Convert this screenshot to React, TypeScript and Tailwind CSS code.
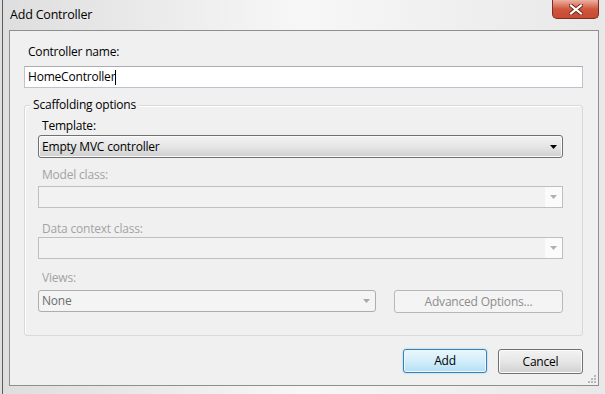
import { ReactNode } from 'react'

function Arrow({ color }: { color: string }) {
  return (
    <svg width="7" height="4" viewBox="0 0 7 4">
      <path d="M0 0h7L3.5 4z" fill={color} />
    </svg>
  )
}

function Label({ children, disabled }: { children: ReactNode; disabled?: boolean }) {
  return (
    <div className={`h-[15px] leading-[15px] pl-[4px] ${disabled ? 'text-[#a3a3a3]' : 'text-black'}`}>{children}</div>
  )
}

function DisabledCombo() {
  return (
    <div className="h-[22px] border border-[#bcc0c3] bg-[#f2f2f2] flex justify-end">
      <div className="w-[17px] h-full bg-[#fbfbfb] flex items-center justify-center">
        <Arrow color="#b0b0b0" />
      </div>
    </div>
  )
}

export default function App() {
  return (
    <div className="w-[605px] h-[394px] overflow-hidden pl-[2px] bg-gradient-to-r from-[#dedede] via-[#f7f7f7] to-[#e8e8e8] font-['Segoe_UI','Open_Sans',sans-serif] text-[12px] tracking-[-0.2px] text-black">
      <div className="h-full border-l border-[#5c5c5c] flex flex-col">
        {/* Title bar */}
        <div className="h-[30px] flex justify-between">
          <div className="pl-[7px] pt-[7px] leading-[16px] text-[12.5px]">Add Controller</div>
          <div className="mr-[6px] w-[47px] h-[19px] rounded-b-[5px] border border-t-0 border-[#7a2f22] bg-gradient-to-b from-[#eab0a2] via-[#d0573d] to-[#c84a31] flex items-center justify-center">
            <svg width="14" height="11" viewBox="0 0 14 11">
              <path d="M2 1.5l10 8M12 1.5l-10 8" stroke="#6b2419" strokeWidth="4" strokeLinecap="square" />
              <path d="M2 1.5l10 8M12 1.5l-10 8" stroke="#ffffff" strokeWidth="2.2" strokeLinecap="square" />
            </svg>
          </div>
        </div>

        {/* Client area */}
        <div className="relative ml-[6px] w-[590px] h-[356px] border border-[#8e8f8f] bg-[#f0f0f0] pt-[13px] pl-[14px] pr-[15px]">
          <Label>Controller name:</Label>
          <div className="mt-[7px] h-[22px] border border-[#bcc3cc] border-t-[#a9adb3] bg-white flex items-center pl-[3px]">
            <span>HomeController</span>
            <span className="w-px h-[15px] bg-black" />
          </div>

          {/* Scaffolding options group */}
          <div className="relative mt-[17px] h-[231px] border border-[#d3dbe0] rounded-[3px] shadow-[inset_1px_1px_0_#ffffff] pt-[12px] pl-[13px] pr-[19px]">
            <div className="absolute -top-[9px] left-[5px] px-[3px] bg-[#f0f0f0] leading-[15px]">Scaffolding options</div>

            <Label>Template:</Label>
            <div className="mt-[2px] h-[23px] border border-[#707070] rounded-[3px] bg-gradient-to-b from-[#f3f3f3] via-[#e6e6e6] to-[#cfcfcf] flex items-center justify-between pl-[3px] pr-[5px] shadow-[inset_0_0_0_1px_#fbfbfb]">
              <span>Empty MVC controller</span>
              <Arrow color="#000000" />
            </div>

            <div className="mt-[9px]">
              <Label disabled>Model class:</Label>
            </div>
            <div className="mt-[4px]">
              <DisabledCombo />
            </div>

            <div className="mt-[13px]">
              <Label disabled>Data context class:</Label>
            </div>
            <div className="mt-[1px]">
              <DisabledCombo />
            </div>

            <div className="mt-[11px]">
              <Label disabled>Views:</Label>
            </div>
            <div className="mt-[5px] flex justify-between">
              <div className="w-[338px] h-[22px] border border-[#adadad] rounded-[3px] bg-[#f4f4f4] flex items-center justify-between pl-[3px] pr-[5px]">
                <span className="text-[#6d6d6d]">None</span>
                <Arrow color="#a8a8a8" />
              </div>
              <div className="w-[169px] h-[23px] border border-[#b5b9bc] rounded-[3px] bg-[#f4f4f4] flex items-center justify-center text-[#8d8d8d]">
                Advanced Options...
              </div>
            </div>
          </div>

          {/* Buttons */}
          <div className="mt-[13px] flex justify-end gap-[11px]">
            <div className="w-[84px] h-[24px] border border-[#3c7fb1] rounded-[3px] bg-gradient-to-b from-[#eaf6fd] via-[#d3eefb] to-[#b3dff4] shadow-[inset_0_0_0_1px_#e9f7fe,0_0_2px_#7cc3e8] flex items-center justify-center">
              Add
            </div>
            <div className="w-[85px] h-[25px] border border-[#707070] rounded-[3px] bg-gradient-to-b from-[#f3f3f3] via-[#e6e6e6] to-[#d0d0d0] shadow-[inset_0_0_0_1px_#fcfcfc] flex items-center justify-center">
              Cancel
            </div>
          </div>

          {/* Resize grip */}
          <svg className="absolute right-[1px] bottom-[1px]" width="10" height="10" viewBox="0 0 10 10">
            {[
              [7, 1], [4, 4], [7, 4], [1, 7], [4, 7], [7, 7],
            ].map(([x, y], i) => (
              <rect key={i} x={x} y={y} width="2" height="2" fill="#b8b8b8" />
            ))}
          </svg>
        </div>
      </div>
    </div>
  )
}
